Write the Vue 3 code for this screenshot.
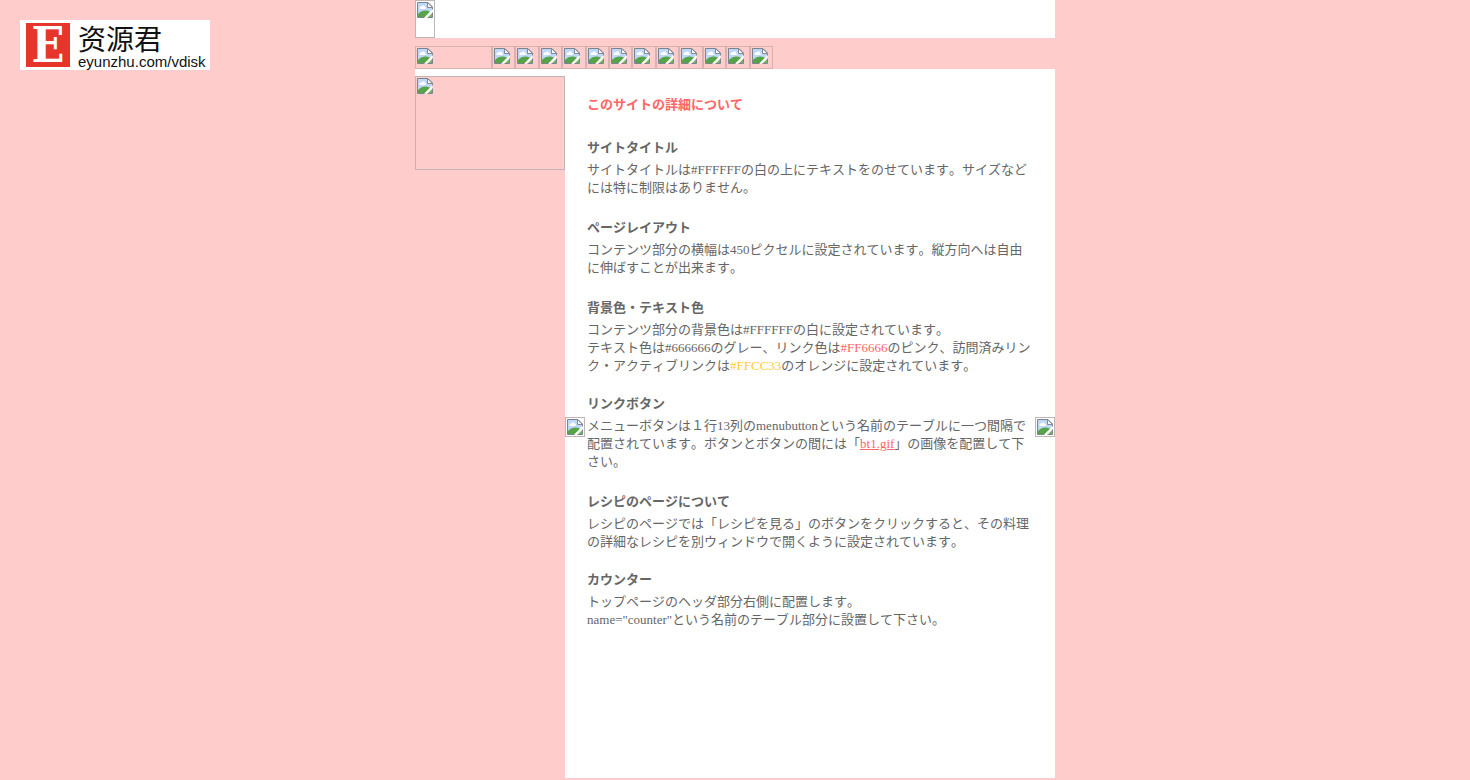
<script setup>
import { h } from 'vue'

const menu = Array.from({ length: 12 }, (_, i) => i + 1)

const MissingIcon = () =>
  h('svg', { class: 'missing-icon', viewBox: '0 0 16 16', width: 16, height: 16, 'aria-hidden': 'true' }, [
    h('path', { d: 'M0.5 0.5H11L15.5 5V7.5L7.5 15.5H0.5Z', fill: '#fff' }),
    h('path', { d: 'M1 1H10.5V5.5H15V7.5L8 14.5H1Z', fill: '#bfd8f8' }),
    h('path', { d: 'M2.500 6C2.500 4.700 3.800 4.300 4.500 4.700C5 3 7.800 3.200 8 5C9.200 5 9.200 7 8 7H3.600C3 7 2.500 6.600 2.500 6Z', fill: '#fff' }),
    h('path', { d: 'M1 15V12C3 9.500 6 8.500 8.500 8.500C10 8.500 11.500 9 13 9.800L7.800 15Z', fill: '#55a548' }),
    h('path', { d: 'M11 15L15 11V15Z', fill: '#6bb35c' }),
    h('path', { d: 'M7.500 15.500L15.500 7.500V10.500L10.500 15.500Z', fill: '#fff' }),
    h('path', { d: 'M7.500 15.500H0.500V0.500H11L15.500 5V7.500M15.500 10.500V15.500H10.500', fill: 'none', stroke: '#7d838c' }),
    h('path', { d: 'M10.500 0.500V5.500H15.500Z', fill: '#f4f6fa', stroke: '#858b94' })
  ])
</script>

<template>
  <div class="page">
    <aside class="brand">
      <a class="logo" href="#">
        <span class="mark">E</span>
        <span class="brand-text">
          <span class="brand-name">资源君</span>
          <span class="brand-url">eyunzhu.com/vdisk</span>
        </span>
      </a>
    </aside>

    <div class="site">
      <header class="header">
        <span class="missing title-image"><MissingIcon /></span>
      </header>

      <nav class="menu">
        <span class="missing menu-lead"><MissingIcon /></span>
        <div class="menu-buttons">
          <a v-for="n in menu" :key="n" class="missing" href="#" :aria-label="`menu ${n}`"><MissingIcon /></a>
        </div>
      </nav>

      <div class="columns">
        <aside class="side">
          <span class="missing side-image"><MissingIcon /></span>
        </aside>

        <main class="content">
          <span class="missing spacer"><MissingIcon /></span>
          <article class="text">
            <h1>このサイトの詳細について</h1>

            <h2>サイトタイトル</h2>
            <p>サイトタイトルは#FFFFFFの白の上にテキストをのせています。サイズなどには特に制限はありません。</p>

            <h2>ページレイアウト</h2>
            <p>コンテンツ部分の横幅は450ピクセルに設定されています。縦方向へは自由に伸ばすことが出来ます。</p>

            <h2>背景色・テキスト色</h2>
            <p class="tight">コンテンツ部分の背景色は#FFFFFFの白に設定されています。<br>テキスト色は#666666のグレー、リンク色は<span class="pink">#FF6666</span>のピンク、訪問済みリンク・アクティブリンクは<span class="orange">#FFCC33</span>のオレンジに設定されています。</p>

            <h2>リンクボタン</h2>
            <p>メニューボタンは１行13列のmenubuttonという名前のテーブルに一つ間隔で配置されています。ボタンとボタンの間には「<a class="pink" href="#">bt1.gif</a>」の画像を配置して下さい。</p>

            <h2>レシピのページについて</h2>
            <p class="tight">レシピのページでは「レシピを見る」のボタンをクリックすると、その料理の詳細なレシピを別ウィンドウで開くように設定されています。</p>

            <h2>カウンター</h2>
            <p>トップページのヘッダ部分右側に配置します。<br>name="counter"という名前のテーブル部分に設置して下さい。</p>
          </article>
          <span class="missing spacer"><MissingIcon /></span>
        </main>
      </div>
    </div>
  </div>
</template>

<style>
body {
  margin: 0;
  background: #ffcccc;
}
</style>

<style scoped>
.page {
  display: grid;
  grid-template-columns: 1fr 640px 1fr;
  align-items: start;
  min-height: 100vh;
  box-sizing: border-box;
  background: #ffcccc;
  color: #666666;
  font: 13px/18px "Liberation Serif", "Noto Sans CJK JP", serif;
  font-kerning: none;
}
.brand {
  padding: 20px;
}
.logo {
  display: flex;
  gap: 8px;
  width: 190px;
  height: 50px;
  box-sizing: border-box;
  padding: 3px 4px 0 6px;
  background: #fff;
  color: #111;
  text-decoration: none;
}
.mark {
  width: 44px;
  height: 44px;
  background: #e6352b;
  color: #fff;
  font: bold 48px/44px "DejaVu Serif Condensed", "DejaVu Serif", serif;
  text-align: center;
}
.brand-text {
  display: flex;
  flex-direction: column;
}
.brand-name {
  font: 28px/30px "Noto Sans CJK SC", sans-serif;
}
.brand-url {
  font: 15px/17px "Liberation Sans", sans-serif;
}
.missing {
  display: block;
  box-sizing: border-box;
  padding: 1px;
  border: 1px solid #c0b4b4;
  overflow: hidden;
  line-height: 0;
}
.missing-icon {
  display: block;
}
.header {
  background: #fff;
}
.title-image {
  width: 20px;
  height: 38px;
}
.menu {
  display: flex;
  padding-top: 8px;
}
.menu .missing {
  height: 23px;
  border-color: #d6b2b2;
}
.menu-lead {
  width: 77px;
}
.menu-buttons {
  display: grid;
  grid-template-columns: repeat(12, 1fr);
  width: 281px;
}
.columns {
  display: flex;
  border-top: 7px solid #fff;
}
.side {
  width: 150px;
}
.side-image {
  height: 94px;
}
.content {
  flex: 1;
  display: flex;
  align-items: center;
  background: #fff;
}
.spacer {
  flex: none;
  width: 20px;
  height: 20px;
}
.text {
  flex: 1;
  padding: 20px 2px 149px;
}
h1,
h2 {
  margin: 0;
  font-size: 13px;
  line-height: 18px;
}
h1 {
  margin-bottom: 25px;
  color: #ff6666;
}
h2 {
  margin-bottom: 4px;
}
p {
  margin: 0 0 22px;
}
p.tight {
  margin-bottom: 20px;
}
p:last-child {
  margin-bottom: 0;
}
.pink {
  color: #ff6666;
}
.orange {
  color: #ffcc33;
}
</style>
